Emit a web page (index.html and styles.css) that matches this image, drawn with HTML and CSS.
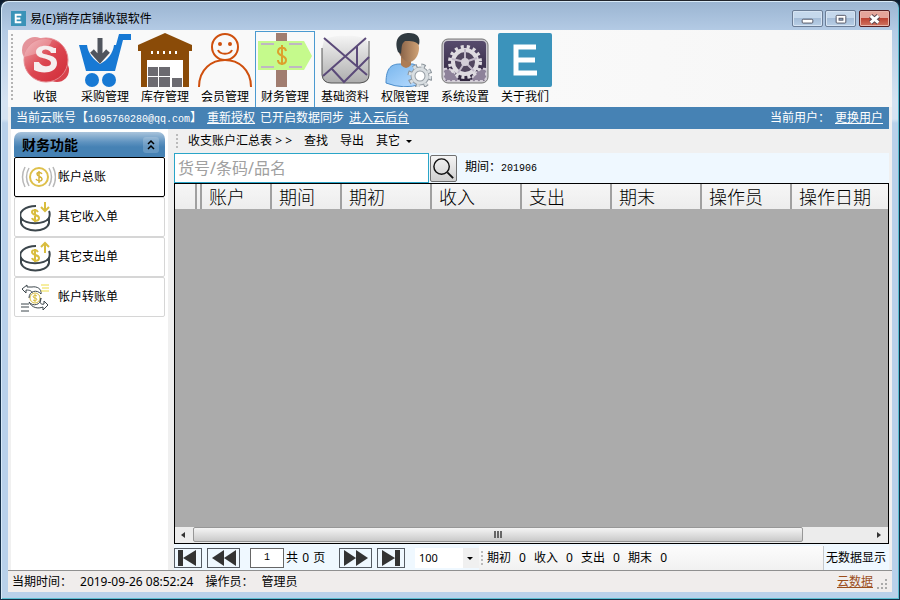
FILE: index.html
```html
<!DOCTYPE html>
<html lang="zh-CN">

<head>
  <meta charset="UTF-8">
  <meta name="viewport" content="width=device-width, initial-scale=1.0">
  <title>易(E)销存店铺收银软件</title>
  <link rel="stylesheet" href="styles.css">
</head>

<body>
  <div class="window">
    <header class="titlebar">
      <svg class="app-icon" viewBox="0 0 16 16"><rect width="16" height="16" fill="#3a93b8"/><path d="M11 4H5v8h6M5 8h5" fill="none" stroke="#fff" stroke-width="2"/></svg>
      <h1>易(E)销存店铺收银软件</h1>
      <div class="window-buttons">
        <button type="button" aria-label="最小化"><svg viewBox="0 0 30 17"><rect x="9.500" y="8.500" width="11" height="4" rx="1" fill="#fff" stroke="#535666"/></svg></button>
        <button type="button" aria-label="最大化"><svg viewBox="0 0 30 17"><rect x="10.500" y="4.500" width="10" height="8" rx="1" fill="#fff" stroke="#535666"/><rect x="13.500" y="7.500" width="4" height="2" fill="#8fb0d0" stroke="#535666"/></svg></button>
        <button type="button" class="close" aria-label="关闭"><svg viewBox="0 0 30 17"><path d="M11 5l8 7M19 5l-8 7" stroke="#5a4650" stroke-width="5"/><path d="M11 5l8 7M19 5l-8 7" stroke="#fff" stroke-width="3"/></svg></button>
      </div>
    </header>

    <div class="client">
      <nav class="toolbar">
        <button type="button" class="tool">
          <svg viewBox="0 0 54 54">
            <defs><linearGradient id="red" x1="0" y1="0" x2="1" y2="1"><stop offset="0" stop-color="#eda9af"/><stop offset=".5" stop-color="#dc4650"/><stop offset="1" stop-color="#d02b38"/></linearGradient></defs>
            <circle cx="17" cy="17" r="13" fill="#e4949b"/>
            <circle cx="39" cy="37" r="12" fill="#d8434d"/>
            <circle cx="28" cy="27" r="22" fill="url(#red)" stroke="#e58a91"/>
            <path d="M6 24C8 10 22 3 34 7c-3 10-15 14-28 17z" fill="#fff" opacity=".25"/>
            <path d="M38 20v-5h-2c-6-4-18-3-18 4 0 8 15 5 15 11 0 5-10 4-12-1h-5v8c7 4 23 4 23-7 0-10-15-7-15-11 0-4 8-3 9 1z" fill="#f6efef"/>
          </svg>
          <span>收银</span>
        </button>
        <button type="button" class="tool">
          <svg viewBox="0 0 54 54">
            <path d="M1 12h8c1 8 6 14 13 19 8-4 13-11 14-19h2l3-11h12v6H45L37 38H8z" fill="#1779d4"/>
            <path d="M22 5v22M14 18l8 9 8-9" fill="none" stroke="#50555e" stroke-width="5"/>
            <circle cx="14" cy="47" r="7" fill="#1779d4"/><circle cx="31" cy="47" r="7" fill="#1779d4"/>
          </svg>
          <span>采购管理</span>
        </button>
        <button type="button" class="tool">
          <svg viewBox="0 0 54 54">
            <path d="M0 12L18 4l9-4 9 4 18 8v6h-3v36h-6V27H9v27H3V18H0z" fill="#8a4b08"/>
            <path d="M14 18v3M20 18v3M26 18v3M32 18v3M38 18v3" stroke="#fff" stroke-width="2"/>
            <path d="M9 27h36v27H9z" fill="#fff"/>
            <path d="M10 34h10v9H10zM21 34h11v9H21zM10 44h10v10H10zM21 44h11v10H21zM34 45h10v9H34z" fill="#6b6a70"/>
          </svg>
          <span>库存管理</span>
        </button>
        <button type="button" class="tool">
          <svg viewBox="0 0 54 54" fill="none" stroke="#cf500e" stroke-width="2">
            <circle cx="27" cy="14" r="13"/>
            <path d="M1 54c0-36 52-36 52 0"/>
            <path d="M20 17c2 5 12 5 14 0"/>
            <circle cx="22" cy="11" r="1"/><circle cx="32" cy="11" r="1"/>
          </svg>
          <span>会员管理</span>
        </button>
        <button type="button" class="tool active">
          <svg viewBox="0 0 54 54">
            <path d="M18 0h11v54H18z" fill="#a17d70"/>
            <path d="M0 8h46l8 15-8 14H0z" fill="#c5fa8c"/>
            <path d="M3 11h13M31 11h13M3 34h13M31 34h13" stroke="#bfb7c3" stroke-width="2"/>
            <path d="M28 18c-1-5-8-4-8 1 0 4 8 3 8 8 0 5-8 5-8 0M24 12v20" fill="none" stroke="#dda02c" stroke-width="2"/>
          </svg>
          <span>财务管理</span>
        </button>
        <button type="button" class="tool">
          <svg viewBox="0 0 54 54">
            <defs><linearGradient id="silver" x1="0" y1="0" x2="0" y2="1"><stop offset="0" stop-color="#f4f4f4"/><stop offset="1" stop-color="#adadad"/></linearGradient></defs>
            <path d="M6 7q10-5 21-4 14-1 21 4 3 4 3 20v16q0 7-8 7H12q-7 0-8-7V16z" fill="url(#silver)"/>
            <path d="M4 15v27q1 8 9 8h29q9-1 9-8V8" fill="none" stroke="#555" stroke-width="1"/>
            <path d="M6 5l43 37M48 5L5 43M39 13v20M51 24L26 49 14 36" fill="none" stroke="#5b4a79" stroke-width="2"/>
          </svg>
          <span>基础资料</span>
        </button>
        <button type="button" class="tool">
          <svg viewBox="0 0 54 54">
            <defs><linearGradient id="shirt" x1="0" y1="0" x2="1" y2="1"><stop offset="0" stop-color="#79b6ed"/><stop offset="1" stop-color="#b8dcff"/></linearGradient><linearGradient id="skin"><stop offset="0" stop-color="#815c43"/><stop offset="1" stop-color="#d0a275"/></linearGradient></defs>
            <path d="M8 50c0-16 6-19 14-19h13c6 2 8 8 8 20q-17 6-35-1z" fill="url(#shirt)" stroke="#4a8cca"/>
            <path d="M23 24h10v8q-5 6-10 0z" fill="#ad7c54"/>
            <path d="M20 14c0-14 21-14 21 1 0 8-5 14-10 14S20 22 20 14z" fill="url(#skin)"/>
            <path d="M20 19C15 5 23 0 31 0c8 0 12 4 10 12-3-4-8-4-14-4-4 3-3 6-4 13z" fill="#303a40"/>
            <circle cx="42" cy="43" r="10" fill="none" stroke="#8a9299" stroke-width="5" stroke-dasharray="4 4"/>
            <circle cx="42" cy="43" r="7" fill="#fff" stroke="#949ca3" stroke-width="5"/><circle cx="42" cy="43" r="10" fill="none" stroke="#d9dee1" stroke-width="3" stroke-dasharray="3 5"/><circle cx="42" cy="43" r="7" fill="none" stroke="#d9dee1" stroke-width="3"/>
          </svg>
          <span>权限管理</span>
        </button>
        <button type="button" class="tool">
          <svg viewBox="0 0 54 54">
            <defs><linearGradient id="plum" x1="0" y1="0" x2="0" y2="1"><stop offset="0" stop-color="#574b6d"/><stop offset="1" stop-color="#30263e"/></linearGradient></defs>
            <rect x="4" y="6" width="46" height="44" rx="6" fill="#c8c5cc" stroke="#777"/>
            <rect x="6" y="8" width="42" height="40" rx="4" fill="url(#plum)"/>
            <path d="M6 36q10-2 15 12h-11q-4 0-4-4zM48 36q-10-2-15 12h11q4 0 4-4z" fill="#8e829a" stroke="#d4cfd8" stroke-width="2" stroke-dasharray="3 2"/>
            <circle cx="27" cy="29" r="15" fill="none" stroke="#dedbe0" stroke-width="4" stroke-dasharray="3 3"/>
            <circle cx="27" cy="29" r="12" fill="#51465f" stroke="#dedbe0" stroke-width="4"/>
            <path d="M27 29V16M27 29l12-4M27 29l9 9M27 29l-7 11M27 29l-13-3" stroke="#c1b9c9" stroke-width="2"/>
            <circle cx="27" cy="29" r="4" fill="#d3ced8"/>
          </svg>
          <span>系统设置</span>
        </button>
        <button type="button" class="tool">
          <svg viewBox="0 0 54 54"><rect x="0" y="0" width="54" height="54" rx="2" fill="#3b93bb"/><path d="M38 14H18v26h21M18 27h19" fill="none" stroke="#fff" stroke-width="5"/></svg>
          <span>关于我们</span>
        </button>
      </nav>

      <div class="account-bar">
        <span>当前云账号【<span class="mono">1695760280@qq.com</span>】</span>
        <a href="#">重新授权</a>
        <span>已开启数据同步</span>
        <a href="#">进入云后台</a>
        <span class="current-user">当前用户：</span>
        <a href="#">更换用户</a>
      </div>

      <div class="workspace">
        <aside class="sidebar">
          <h2>财务功能
            <svg viewBox="0 0 16 16"><rect width="16" height="16" rx="3" fill="#fff" opacity=".18"/><path d="M5 7l3-3 3 3M5 12l3-3 3 3" fill="none" stroke="#000" stroke-width="1.500"/></svg>
          </h2>
          <button type="button" class="side-item active">
            <svg viewBox="0 0 36 32" fill="none">
              <circle cx="19" cy="16" r="9" stroke="#dec04b" stroke-width="2"/>
              <path d="M22 13c-1-2-5-2-5 0 0 3 5 2 5 5 0 3-5 2-6 0M19 10v12" stroke="#d6b43a" stroke-width="1.500"/>
              <path d="M5 6q-5 10 0 20M9 7q-5 9 0 18M33 6q5 10 0 20M29 7q5 9 0 18" stroke="#b8b8b8" stroke-width="1.500"/>
            </svg>
            帐户总账
          </button>
          <button type="button" class="side-item">
            <svg viewBox="0 0 36 32" fill="none">
              <path d="M16 5C5 5-2 11 1 17c5 7 23 7 28 0 1-3 1-5 0-7M1 16v6c3 10 26 10 28 0v-6" stroke="#3c464c" stroke-width="2"/>
              <path d="M18 11c-2-3-6-2-6 0 0 4 7 2 7 6 0 4-6 3-7 0M15 8v13" stroke="#d9bd3e" stroke-width="2"/>
              <path d="M25 1v9M21 6l4 4 4-4" stroke="#d9bd3e" stroke-width="2"/>
            </svg>
            其它收入单
          </button>
          <button type="button" class="side-item">
            <svg viewBox="0 0 36 32" fill="none">
              <path d="M16 5C5 5-2 11 1 17c5 7 23 7 28 0 1-3 1-5 0-7M1 16v6c3 10 26 10 28 0v-6" stroke="#3c464c" stroke-width="2"/>
              <path d="M18 11c-2-3-6-2-6 0 0 4 7 2 7 6 0 4-6 3-7 0M15 8v13" stroke="#d9bd3e" stroke-width="2"/>
              <path d="M25 12V3M21 6l4-4 4 4" stroke="#d9bd3e" stroke-width="2"/>
            </svg>
            其它支出单
          </button>
          <button type="button" class="side-item">
            <svg viewBox="0 0 36 32" fill="none">
              <circle cx="15" cy="17" r="5" stroke="#d9bd3e"/>
              <path d="M17 15c-1-1-4-1-4 1 0 1 4 1 4 2 0 2-3 2-4 1M15 13v8" stroke="#d9bd3e"/>
              <path d="M9 17c0-7 8-9 12-4 1-5-4-8-9-7H7V4L2 8l4 4V9c4 0 6 1 6 3M21 17c0 7-8 9-12 4 3 6 9 7 14 5v3l5-5-4-4v3c-3 1-5-1-3-6" stroke="#3c464c"/>
              <path d="M21 4h8M22 7h7M21 10h8" stroke="#eddc42"/>
              <path d="M1 23h8M1 26h8M1 30h8" stroke="#3c464c"/>
            </svg>
            帐户转账单
          </button>
        </aside>

        <main class="content">
          <div class="menu">
            <span class="grip"></span>
            <span class="view-name">收支账户汇总表 <span>&gt;</span> <span>&gt;</span></span>
            <button type="button">查找</button>
            <button type="button">导出</button>
            <button type="button">其它 <span class="caret"></span></button>
          </div>

          <form class="search">
            <input type="text" placeholder="货号/条码/品名" aria-label="货号/条码/品名">
            <button type="button" aria-label="查找"><svg viewBox="0 0 26 26"><circle cx="11" cy="11" r="8" fill="none" stroke="#111" stroke-width="1.500"/><path d="M17 17l6 6" stroke="#111" stroke-width="2"/></svg></button>
            <span>期间：<span class="mono">201906</span></span>
          </form>

          <div class="grid">
            <table>
              <thead>
                <tr>
                  <th class="row-head"></th>
                  <th class="splitter"></th>
                  <th class="narrow">账户</th>
                  <th class="narrow">期间</th>
                  <th>期初</th>
                  <th>收入</th>
                  <th>支出</th>
                  <th>期末</th>
                  <th>操作员</th>
                  <th class="last">操作日期</th>
                </tr>
              </thead>
            </table>
            <div class="scrollbar">
              <button type="button" aria-label="向左"><svg viewBox="0 0 16 16"><path d="M10 5v6L6 8z" fill="#333"/></svg></button>
              <div class="track"><div class="thumb"></div></div>
              <button type="button" aria-label="向右"><svg viewBox="0 0 16 16"><path d="M6 5v6l4-3z" fill="#333"/></svg></button>
            </div>
          </div>

          <div class="pager">
            <button type="button" class="small" aria-label="首页"><svg viewBox="0 0 26 18"><path d="M3 1h5v16H3zM21 1v16L8 9z"/></svg></button>
            <button type="button" aria-label="上一页"><svg viewBox="0 0 31 18"><path d="M16 1v16L4 9zM28 1v16L16 9z"/></svg></button>
            <input type="text" class="mono" value="1" aria-label="页码">
            <span class="total">共 <span class="num">0</span> 页</span>
            <button type="button" aria-label="下一页"><svg viewBox="0 0 31 18"><path d="M4 1v16l12-8zM16 1v16l12-8z"/></svg></button>
            <button type="button" class="small" aria-label="末页"><svg viewBox="0 0 26 18"><path d="M4 1v16l13-8zM17 1h5v16h-5z"/></svg></button>
            <div class="page-size">
              <select aria-label="每页条数"><option>100</option></select>
              <span class="caret"></span>
            </div>
            <div class="summary">
              <span class="grip"></span>
              <span>期初</span><span class="num">0</span>
              <span>收入</span><span class="num">0</span>
              <span>支出</span><span class="num">0</span>
              <span>期末</span><span class="num">0</span>
            </div>
            <span class="empty">无数据显示</span>
          </div>
        </main>
      </div>

      <footer class="statusbar">
        <span>当期时间：</span>
        <time>2019-09-26 08:52:24</time>
        <span>操作员：</span>
        <span class="operator">管理员</span>
        <a href="#">云数据</a>
        <svg viewBox="0 0 12 12" fill="#aaa"><path d="M8 0h2v2H8zM4 4h2v2H4zM8 4h2v2H8zM0 8h2v2H0zM4 8h2v2H4zM8 8h2v2H8z"/></svg>
      </footer>
    </div>
  </div>
</body>

</html>
```
FILE: styles.css
```css
* {
  box-sizing: border-box;
}

body {
  margin: 0;
  background: #0c1c30;
  font-family: "Noto Sans", "Noto Sans CJK SC", sans-serif;
  font-size: 12px;
  line-height: 18px;
  color: #000;
}

button,
input,
select {
  font: inherit;
  color: inherit;
  padding: 0;
  margin: 0;
  border: 0;
  border-radius: 0;
  background: none;
}

svg {
  display: block;
  flex: none;
}

.mono {
  font-family: "Liberation Mono", monospace;
  font-size: 10px;
}

.window {
  display: flex;
  flex-direction: column;
  min-height: 100vh;
  padding: 0 7px 7px;
  border: 1px solid #173048;
  border-top-color: #20242c;
  border-radius: 8px 8px 0 0;
  background: linear-gradient(#9ab4d1, #b4cbe5 30px, #d5e3f2 100px, #d5e3f2 118px, #b9d1ea 122px);
  box-shadow: inset 1px 1px #d8eaf8, inset -1px -1px #5bbfd2;
}

.titlebar {
  display: flex;
  align-items: center;
  height: 29px;
  padding: 6px 2px 0 3px;
}

.app-icon {
  width: 15px;
  height: 15px;
  margin-right: 4px;
}

.titlebar h1 {
  margin: 0;
  font-size: 12px;
  font-weight: normal;
}

.window-buttons {
  display: flex;
  gap: 2px;
  margin-left: auto;
}

.window-buttons button {
  width: 31px;
  height: 17px;
  border: 1px solid #6b7d96;
  border-radius: 2px;
  background: linear-gradient(#c5d8ec 50%, #a5bdd8 50%, #b9cfe6);
  box-shadow: inset 0 0 0 1px #d6e4f3;
}

.window-buttons .close {
  margin-left: 1px;
  border-color: #571f22;
  background: linear-gradient(#e5a59a 45%, #bd4433 50%, #cf7461);
  box-shadow: inset 0 0 0 1px #e8b5ab;
}

.window-buttons svg {
  width: 100%;
}

.client {
  flex: 1;
  display: flex;
  flex-direction: column;
  background: #f0f0f0;
}

.toolbar {
  display: flex;
  height: 77px;
  padding: 1px 3px 0;
  background: linear-gradient(90deg, #f9f9f9, #f9f9f9 60%, #f6f6f6);
}

.toolbar::before {
  content: "";
  width: 2px;
  margin: 3px 2px 6px 0;
  background: repeating-linear-gradient(#b4b4b4 0 2px, transparent 2px 4px);
}

.tool {
  display: flex;
  flex-direction: column;
  align-items: center;
  width: 60px;
  padding-top: 1px;
  border: 1px solid transparent;
}

.tool.active {
  border-color: #4b9ad0;
  border-bottom: 0;
}

.tool svg {
  width: 54px;
  height: 54px;
  margin-bottom: 1px;
}

.account-bar {
  display: flex;
  gap: 5px;
  height: 22px;
  margin: 0 3px;
  padding: 0 6px 0 5px;
  background: #4682b4;
  color: #fff;
  line-height: 22px;
}

.account-bar a {
  color: #fff;
}

.account-bar .current-user {
  margin-left: auto;
}

.workspace {
  flex: 1;
  display: flex;
  gap: 6px;
  padding: 0 3px;
}

.sidebar {
  width: 157px;
  padding: 3px;
  background: #fff;
}

.sidebar h2 {
  display: flex;
  align-items: center;
  justify-content: space-between;
  height: 25px;
  margin: 0;
  padding: 0 6px 0 8px;
  border-radius: 7px 7px 0 0;
  background: linear-gradient(#a9c4dc, #5f93c0 40%, #4682b4 60%, #4682b4);
  font-size: 14px;
}

.sidebar h2 svg {
  width: 16px;
  height: 16px;
}

.side-item {
  display: flex;
  align-items: center;
  width: 100%;
  height: 40px;
  padding-left: 5px;
  border: 1px solid #d6d6d6;
  border-radius: 2px;
}

.side-item.active {
  border-color: #000;
}

.side-item svg {
  width: 36px;
  height: 32px;
  margin-right: 2px;
}

.content {
  flex: 1;
  min-width: 0;
  display: flex;
  flex-direction: column;
}

.menu {
  display: flex;
  align-items: center;
  gap: 12px;
  height: 24px;
  padding-left: 2px;
}

.menu .view-name {
  width: 104px;
}

.grip {
  width: 2px;
  height: 14px;
  background: repeating-linear-gradient(#bbb 0 2px, transparent 2px 4px);
}

.menu .grip {
  margin-right: -2px;
}

.caret {
  display: inline-block;
  border: 3px solid transparent;
  border-top-color: #000;
  border-bottom: 0;
  vertical-align: middle;
}

.menu .caret {
  margin-left: 3px;
}

.search {
  display: flex;
  align-items: center;
  height: 30px;
  background: #eff8ff;
}

.search input {
  width: 255px;
  height: 30px;
  padding: 0 3px;
  border: 1px solid #2aa5c8;
  background: #fff;
  font-size: 16px;
}

.search input::placeholder {
  color: #a0a0a0;
}

.search button {
  width: 27px;
  height: 27px;
  margin: 0 8px 0 1px;
  border: 1px solid #707070;
  border-radius: 2px;
  background: linear-gradient(#f4f4f4, #cfcfcf);
}

.grid {
  flex: 1;
  display: flex;
  flex-direction: column;
  justify-content: space-between;
  border: 1px solid #000;
  background: #ababab;
}

table {
  width: 100%;
  table-layout: fixed;
  border-collapse: collapse;
}

th {
  width: 90px;
  height: 25px;
  padding: 0 0 0 7px;
  border-right: 2px solid #a0a0a0;
  background: linear-gradient(#f6f6f6, #ededed);
  font-size: 18px;
  font-weight: 300;
  line-height: 24px;
  text-align: left;
  white-space: nowrap;
}

th.narrow {
  width: 70px;
}

th.row-head {
  width: 21px;
}

th.splitter {
  width: 5px;
  padding: 0;
}

th.last {
  width: auto;
  border-right: 0;
}

.scrollbar {
  display: flex;
  height: 16px;
  background: #ececec;
}

.scrollbar button {
  width: 17px;
}

.scrollbar button svg {
  width: 16px;
  height: 16px;
}

.track {
  flex: 1;
  padding-left: 1px;
}

.thumb {
  display: flex;
  justify-content: center;
  align-items: center;
  width: 90%;
  height: 15px;
  border: 1px solid #979797;
  border-radius: 2px;
  background: linear-gradient(#f4f4f4, #dfdfdf 50%, #c9c9c9);
}

.thumb::before {
  content: "";
  width: 8px;
  height: 7px;
  background: repeating-linear-gradient(90deg, #666 0 2px, transparent 2px 3px);
}

.pager {
  display: flex;
  align-items: center;
  height: 26px;
  padding-top: 1px;
  background: #eff8ff;
}

.pager button {
  width: 33px;
  height: 20px;
  border: 1px solid #555b63;
}

.pager button.small {
  width: 28px;
}

.pager button svg {
  width: 100%;
  height: 18px;
  fill: #333;
}

.pager button + button {
  margin-left: 5px;
}

.pager input {
  width: 34px;
  height: 20px;
  margin: 0 2px 0 10px;
  border: 1px solid #666;
  background: #fff;
  text-align: center;
}

.pager .total {
  width: 53px;
}

.num {
  display: inline-block;
  width: 15px;
  text-align: center;
}

.total .num {
  width: 9px;
}

.page-size {
  position: relative;
  width: 64px;
  height: 20px;
  margin-left: 10px;
}

.page-size select {
  appearance: none;
  width: 100%;
  height: 20px;
  padding-left: 4px;
  background: linear-gradient(90deg, #fff 48px, #f0f0f0 48px);
  font-size: 11px;
}

.page-size .caret {
  position: absolute;
  top: 9px;
  right: 6px;
  pointer-events: none;
}

.summary {
  flex: 1;
  display: flex;
  align-items: center;
  gap: 4px;
  height: 24px;
  padding-left: 2px;
  border-right: 1px solid #c5c9cc;
  background: linear-gradient(#fcfcfc, #f1f1f1);
}

.empty {
  padding: 0 3px 0 2px;
}

.statusbar {
  display: flex;
  align-items: center;
  height: 22px;
  padding: 0 3px 0 4px;
  border-top: 1px solid #909090;
  background: #f0edec;
}

.statusbar time {
  margin: 0 12px 0 8px;
}

.statusbar .operator {
  margin-left: 8px;
}

.statusbar a {
  margin-left: auto;
  color: #9c4e1c;
}

.statusbar svg {
  width: 12px;
  height: 12px;
  margin: 6px 0 0 4px;
}
```
